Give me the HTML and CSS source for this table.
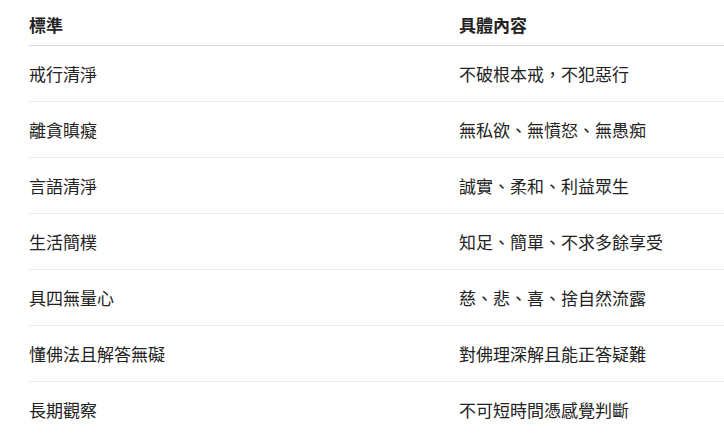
FILE: index.html
```html
<!DOCTYPE html>
<html lang="zh-Hant">
<head>
<meta charset="utf-8">
<link rel="stylesheet" href="styles.css">
</head>
<body>
<table class="tbl">
<thead>
<tr><th class="c1">標準</th><th>具體內容</th></tr>
</thead>
<tbody>
<tr><td class="c1">戒行清淨</td><td>不破根本戒，不犯惡行</td></tr>
<tr><td class="c1">離貪瞋癡</td><td>無私欲、無憤怒、無愚痴</td></tr>
<tr><td class="c1">言語清淨</td><td>誠實、柔和、利益眾生</td></tr>
<tr><td class="c1">生活簡樸</td><td>知足、簡單、不求多餘享受</td></tr>
<tr><td class="c1">具四無量心</td><td>慈、悲、喜、捨自然流露</td></tr>
<tr><td class="c1">懂佛法且解答無礙</td><td>對佛理深解且能正答疑難</td></tr>
<tr><td class="c1">長期觀察</td><td>不可短時間憑感覺判斷</td></tr>
</tbody>
</table>
</body>
</html>
```
FILE: styles.css
```css
html, body {
  margin: 0;
  padding: 0;
  background: #fff;
  overflow: hidden;
}
body {
  font-family: "Noto Sans CJK TC", "Noto Sans", sans-serif;
  color: #222;
  font-size: 17px;
  line-height: 24px;
}
.tbl {
  margin-left: 29px;
  width: calc(100% - 29px);
  border-collapse: collapse;
}
.tbl th {
  text-align: left;
  font-weight: 600;
  padding: 13px 0 8px 0;
  border-bottom: 1px solid #d9d9d9;
}
.tbl td {
  padding: 16px 0 15px 0;
  border-bottom: 1px solid #ececec;
  font-weight: 400;
}
.tbl tbody tr:last-child td {
  border-bottom: none;
}
.c1 {
  width: 430px;
}
```
